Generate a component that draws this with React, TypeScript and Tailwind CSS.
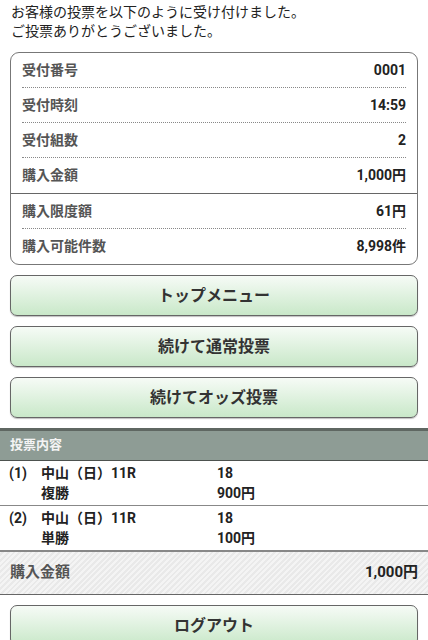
const font = "font-['Roboto','Noto_Sans_CJK_JP',sans-serif]";

const infoTop = [
  { label: "受付番号", value: "0001" },
  { label: "受付時刻", value: "14:59" },
  { label: "受付組数", value: "2" },
  { label: "購入金額", value: "1,000円" },
];

const infoBottom = [
  { label: "購入限度額", value: "61円" },
  { label: "購入可能件数", value: "8,998件" },
];

const bets = [
  { no: "(1)", race: "中山（日）11R", type: "複勝", horse: "18", amount: "900円" },
  { no: "(2)", race: "中山（日）11R", type: "単勝", horse: "18", amount: "100円" },
];

function InfoRow({ label, value, last }: { label: string; value: string; last?: boolean }) {
  return (
    <div
      className={`flex h-[35px] items-center justify-between ${
        last ? "" : "border-b border-dotted border-[#888]"
      }`}
    >
      <span className="text-[14px] font-bold text-[#555]">{label}</span>
      <span className="text-[14px] font-bold text-[#222]">{value}</span>
    </div>
  );
}

function GreenButton({ children }: { children: React.ReactNode }) {
  return (
    <button className="flex h-[41px] w-full items-center justify-center rounded-[7px] border border-[#666] bg-gradient-to-b from-[#f6fbf6] to-[#c9e8c9] text-[16px] font-bold text-[#333] shadow-[0_1px_1px_rgba(0,0,0,0.25)]">
      {children}
    </button>
  );
}

export default function App() {
  return (
    <div className={`${font} min-h-[640px] w-[428px] overflow-hidden bg-white`}>
      <div className="px-[11px] pt-[3px] text-[14px] leading-[19px] text-[#222]">
        <p>お客様の投票を以下のように受け付けました。</p>
        <p>ご投票ありがとうございました。</p>
      </div>

      <div className="mx-[10px] mt-[11px] rounded-[9px] border border-[#777] px-[11px]">
        {infoTop.map((r, i) => (
          <InfoRow key={r.label} label={r.label} value={r.value} last={i === infoTop.length - 1} />
        ))}
        <div className="-mx-[11px] border-t border-[#666]" />
        {infoBottom.map((r, i) => (
          <InfoRow key={r.label} label={r.label} value={r.value} last={i === infoBottom.length - 1} />
        ))}
      </div>

      <div className="mx-[10px] mt-[10px] flex flex-col gap-[10px]">
        <GreenButton>トップメニュー</GreenButton>
        <GreenButton>続けて通常投票</GreenButton>
        <GreenButton>続けてオッズ投票</GreenButton>
      </div>

      <div className="mt-[10px] border-t-[3px] border-b border-t-[#5f6762] border-b-[#4d524f] bg-[#8e9c95] px-[10px] pt-[3px] pb-[4px] text-[13px] font-bold leading-[22px] text-[#f4f4f4]">
        投票内容
      </div>

      {bets.map((b) => (
        <div
          key={b.no}
          className="flex border-b border-[#888] px-[9px] py-[2px] text-[14px] font-bold leading-[20px] text-[#222]"
        >
          <span className="w-[32px]">{b.no}</span>
          <div className="w-[176px]">
            <div>{b.race}</div>
            <div>{b.type}</div>
          </div>
          <div>
            <div>{b.horse}</div>
            <div>{b.amount}</div>
          </div>
        </div>
      ))}

      <div className="flex h-[44px] items-center justify-between border-b border-[#666] bg-[repeating-linear-gradient(135deg,#f4f4f4_0px,#f4f4f4_2px,#e9e9e9_2px,#e9e9e9_4px)] px-[10px] shadow-[inset_0_1px_0_#888]">
        <span className="text-[15px] font-bold text-[#555]">購入金額</span>
        <span className="text-[15px] font-bold text-[#222]">1,000円</span>
      </div>

      <div className="mx-[10px] mt-[10px]">
        <GreenButton>ログアウト</GreenButton>
      </div>
    </div>
  );
}
